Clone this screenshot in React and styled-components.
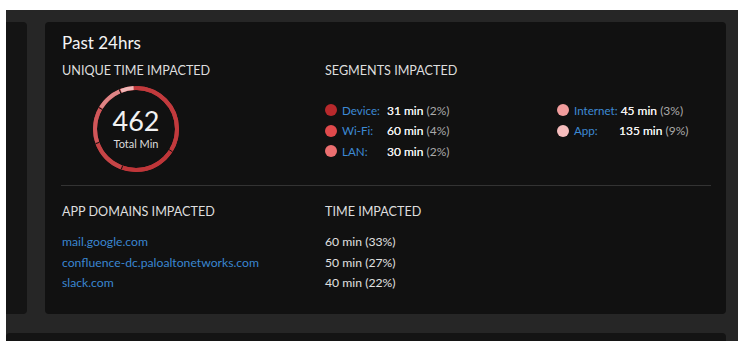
import React from "react";
import styled, { createGlobalStyle } from "styled-components";

const GlobalStyle = createGlobalStyle`
  html, body {
    margin: 0;
    padding: 0;
    background: #ffffff;
    font-family: Lato, "Open Sans", sans-serif;
  }
`;

const segments = [
  { label: "Device:", value: "31 min", pct: "(2%)", color: "#b8292c" },
  { label: "Wi-Fi:", value: "60 min", pct: "(4%)", color: "#e04a4c" },
  { label: "LAN:", value: "30 min", pct: "(2%)", color: "#ec6f70" },
  { label: "Internet:", value: "45 min", pct: "(3%)", color: "#f29d9d" },
  { label: "App:", value: "135 min", pct: "(9%)", color: "#f6bdbd" },
];

const domains = [
  { name: "mail.google.com", value: "60 min", pct: "(33%)" },
  { name: "confluence-dc.paloaltonetworks.com", value: "50 min", pct: "(27%)" },
  { name: "slack.com", value: "40 min", pct: "(22%)" },
];

// ring arcs in degrees, clockwise from the top
const arcs = [
  { from: 2, to: 120, color: "#c23a3d" },
  { from: 121, to: 200, color: "#bf3639" },
  { from: 201, to: 250, color: "#c64547" },
  { from: 251, to: 300, color: "#d0575a" },
  { from: 301, to: 336, color: "#de8485" },
  { from: 338, to: 356, color: "#efb7b7" },
];

const Donut = () => {
  const r = 41;
  const c = 2 * Math.PI * r;
  return (
    <DonutBox>
      <svg width="88" height="88" viewBox="0 0 88 88">
        <circle cx="44" cy="44" r={r} fill="none" stroke="#c23a3d" strokeWidth="4" />
        {arcs.map((a, i) => {
          const len = ((a.to - a.from) / 360) * c;
          return (
            <circle
              key={i}
              cx="44"
              cy="44"
              r={r}
              fill="none"
              stroke={a.color}
              strokeWidth="4"
              strokeDasharray={`${len} ${c}`}
              strokeDashoffset={-((a.from / 360) * c)}
              transform="rotate(-90 44 44)"
            />
          );
        })}
        {[122, 200, 250, 300, 337].map((d) => {
          const rad = ((d - 90) * Math.PI) / 180;
          return (
            <line
              key={d}
              x1={44 + 39 * Math.cos(rad)}
              y1={44 + 39 * Math.sin(rad)}
              x2={44 + 43 * Math.cos(rad)}
              y2={44 + 43 * Math.sin(rad)}
              stroke="#111"
              strokeWidth="1"
            />
          );
        })}
      </svg>
      <DonutText>
        <Big>462</Big>
        <Small>Total Min</Small>
      </DonutText>
    </DonutBox>
  );
};

const SegmentRow = ({ s }) => (
  <Row>
    <Dot color={s.color} />
    <Label>{s.label}</Label>
    <Value>
      {s.value} <Pct>{s.pct}</Pct>
    </Value>
  </Row>
);

const App = () => {
  return (
    <>
      <GlobalStyle />
      <Frame>
        <SideCard />
        <Card>
          <Title>Past 24hrs</Title>
          <Section>
            <div>
              <Heading>Unique Time Impacted</Heading>
              <Donut />
            </div>
            <div>
              <Heading>Segments Impacted</Heading>
              <SegGrid>
                <div>
                  {segments.slice(0, 3).map((s) => (
                    <SegmentRow key={s.label} s={s} />
                  ))}
                </div>
                <div>
                  {segments.slice(3).map((s) => (
                    <SegmentRow key={s.label} s={s} />
                  ))}
                </div>
              </SegGrid>
            </div>
          </Section>
          <Divider />
          <Section>
            <div>
              <Heading $gap={18}>App Domains Impacted</Heading>
              <List>
                {domains.map((d) => (
                  <Link key={d.name}>{d.name}</Link>
                ))}
              </List>
            </div>
            <div>
              <Heading $gap={18}>Time Impacted</Heading>
              <List>
                {domains.map((d) => (
                  <Plain key={d.name}>
                    {d.value} {d.pct}
                  </Plain>
                ))}
              </List>
            </div>
          </Section>
        </Card>
        <BottomCard />
      </Frame>
    </>
  );
};

export default App;

const Frame = styled.div`
  margin: 10px 4px 0 6px;
  height: 331px;
  background: #262626;
  overflow: hidden;
  display: grid;
  grid-template-columns: 21px 1fr;
  grid-template-rows: 292px auto;
  column-gap: 18px;
  row-gap: 19px;
  padding: 12px 12px 0 0;
  box-sizing: border-box;
`;

const SideCard = styled.div`
  background: #141414;
  border-radius: 0 4px 4px 0;
`;

const BottomCard = styled.div`
  grid-column: 1 / 3;
  background: #141414;
  height: 20px;
  border-radius: 4px;
`;

const Card = styled.div`
  background: #111111;
  border-radius: 4px;
  padding: 11px 16px 0 17px;
  color: #e6e6e6;
`;

const Title = styled.div`
  font-size: 17px;
  line-height: 20px;
  color: #f4f4f4;
`;

const Section = styled.div`
  display: grid;
  grid-template-columns: 263px 1fr;
`;

const Heading = styled.div`
  text-transform: uppercase;
  font-size: 12.6px;
  line-height: 16px;
  color: #dedede;
  margin-top: ${(p) => p.$gap || 10}px;
`;

const DonutBox = styled.div`
  position: relative;
  width: 88px;
  height: 88px;
  margin: 6px 0 0 30px;
`;

const DonutText = styled.div`
  position: absolute;
  inset: 0;
  display: flex;
  flex-direction: column;
  align-items: center;
  justify-content: center;
  padding-bottom: 2px;
`;

const Big = styled.div`
  font-size: 27px;
  line-height: 30px;
  color: #f2f2f2;
`;

const Small = styled.div`
  font-size: 11px;
  line-height: 14px;
  margin-top: 1px;
  color: #dcdcdc;
`;

const SegGrid = styled.div`
  display: grid;
  grid-template-columns: 232px 1fr;
  margin-top: 21px;
`;

const Row = styled.div`
  display: flex;
  align-items: center;
  height: 20.5px;
  font-size: 12px;
`;

const Dot = styled.span`
  width: 12px;
  height: 12px;
  border-radius: 50%;
  background: ${(p) => p.color};
  margin-right: 5px;
  flex-shrink: 0;
`;

const Label = styled.span`
  color: #3d8ad4;
  min-width: 42px;
  margin-right: 3px;
  font-size: 11.6px;
`;

const Value = styled.span`
  color: #f0f0f0;
  font-weight: 400;
  text-shadow: 0 0 0.3px #f0f0f0;
`;

const Pct = styled.span`
  color: #aaaaaa;
  text-shadow: none;
`;

const Divider = styled.div`
  height: 1px;
  background: #333333;
  margin: 12px -1px 0 -1px;
`;

const List = styled.div`
  margin-top: 12px;
  display: flex;
  flex-direction: column;
`;

const Link = styled.span`
  color: #3a86d0;
  font-size: 12.2px;
  line-height: 20.5px;
`;

const Plain = styled.span`
  color: #e0e0e0;
  font-size: 12.2px;
  line-height: 20.5px;
`;
